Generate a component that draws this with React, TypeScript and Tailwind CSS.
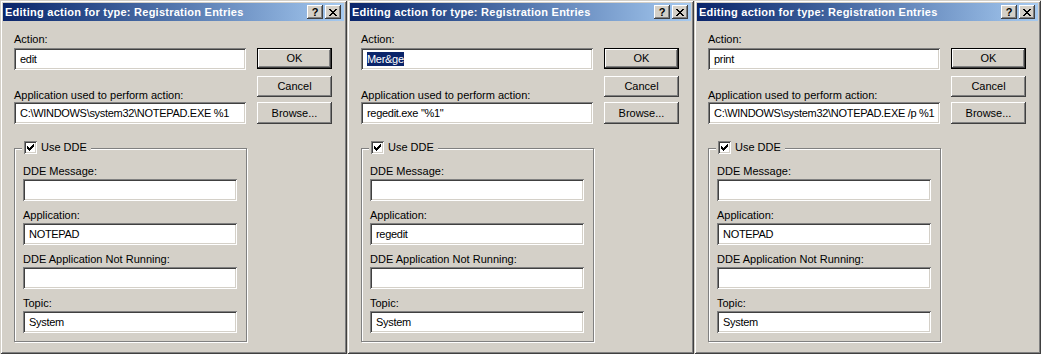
import React from "react";

const RAISED =
  "shadow-[inset_-1px_-1px_0_#404040,inset_1px_1px_0_#ffffff,inset_-2px_-2px_0_#808080,inset_2px_2px_0_#d4d0c8]";
const SUNKEN =
  "shadow-[inset_1px_1px_0_#808080,inset_-1px_-1px_0_#ffffff,inset_2px_2px_0_#404040,inset_-2px_-2px_0_#d4d0c8]";

function CloseGlyph() {
  const rows: number[][] = [
    [0, 1, 6, 7],
    [1, 2, 5, 6],
    [2, 3, 4, 5],
    [3, 4],
    [2, 3, 4, 5],
    [1, 2, 5, 6],
    [0, 1, 6, 7],
  ];
  return (
    <svg width="8" height="7" viewBox="0 0 8 7" shapeRendering="crispEdges">
      {rows.map((r, y) =>
        r.map((x) => <rect key={`${x}-${y}`} x={x} y={y} width="1" height="1" fill="#000" />)
      )}
    </svg>
  );
}

function CheckGlyph() {
  const rows: number[][] = [
    [6],
    [5, 6],
    [0, 4, 5, 6],
    [0, 1, 3, 4, 5],
    [0, 1, 2, 3, 4],
    [1, 2, 3],
    [2],
  ];
  return (
    <svg width="7" height="7" viewBox="0 0 7 7" shapeRendering="crispEdges">
      {rows.map((r, y) =>
        r.map((x) => <rect key={`${x}-${y}`} x={x} y={y} width="1" height="1" fill="#000" />)
      )}
    </svg>
  );
}

function Field({
  value,
  width,
  selected,
}: {
  value: string;
  width: string;
  selected?: boolean;
}) {
  return (
    <div
      className={`${width} h-[22px] bg-white ${SUNKEN} pl-[6px] flex items-center whitespace-nowrap overflow-hidden tracking-[-0.3px]`}
    >
      {selected ? (
        <span className="bg-[#0a246a] text-white leading-[14px]">{value}</span>
      ) : (
        <span className="leading-[14px]">{value}</span>
      )}
    </div>
  );
}

function Button({ label, isDefault, h }: { label: string; isDefault?: boolean; h: string }) {
  if (isDefault) {
    return (
      <div className={`w-[75px] ${h} border border-black`}>
        <div className={`w-full h-full ${RAISED} flex items-center justify-center`}>{label}</div>
      </div>
    );
  }
  return (
    <div className={`w-[75px] ${h} ${RAISED} flex items-center justify-center`}>{label}</div>
  );
}

function Label({ text }: { text: string }) {
  return <div className="h-[13px] leading-[13px] whitespace-nowrap">{text}</div>;
}

type D = {
  action: string;
  selected?: boolean;
  app: string;
  ddeApp: string;
};

function Dialog({ d }: { d: D }) {
  return (
    <div className="w-[347px] h-[354px] shrink-0 bg-[#d4d0c8] p-[3px] flex flex-col shadow-[inset_1px_1px_0_#d4d0c8,inset_-1px_-1px_0_#404040,inset_2px_2px_0_#ffffff,inset_-2px_-2px_0_#808080]">
      <div className="h-[18px] bg-linear-to-r from-[#0a246a] to-[#a6caf0] flex items-center pl-[2px] pr-[3px]">
        <div className="flex-1 text-white font-bold text-[11px] whitespace-nowrap tracking-[0.25px]">
          Editing action for type: Registration Entries
        </div>
        <div className="flex gap-[2px]">
          <div className={`w-[16px] h-[14px] bg-[#d4d0c8] ${RAISED} flex items-center justify-center font-bold text-[11px] leading-none text-black`}>
            ?
          </div>
          <div className={`w-[16px] h-[14px] bg-[#d4d0c8] ${RAISED} flex items-center justify-center`}>
            <CloseGlyph />
          </div>
        </div>
      </div>
      <div className="pl-[11px] pt-[12px] flex flex-col">
        <div className="flex gap-[11px]">
          <div className="w-[232px] flex flex-col">
            <Label text="Action:" />
            <div className="mt-[2px]">
              <Field value={d.action} width="w-[232px]" selected={d.selected} />
            </div>
            <div className="mt-[19px]">
              <Label text="Application used to perform action:" />
            </div>
            <Field value={d.app} width="w-[232px]" />
          </div>
          <div className="flex flex-col pt-[15px]">
            <Button label="OK" isDefault h="h-[21px]" />
            <div className="mt-[7px]">
              <Button label="Cancel" h="h-[21px]" />
            </div>
            <div className="mt-[5px]">
              <Button label="Browse..." h="h-[22px]" />
            </div>
          </div>
        </div>
        <div className="relative mt-[24px] w-[233px] border border-[#808080] shadow-[inset_1px_1px_0_#ffffff,1px_1px_0_#ffffff] pl-[8px] pt-[16px] pb-[8px] flex flex-col gap-[8px]">
          <div className="absolute left-[7px] top-[-8px] h-[13px] bg-[#d4d0c8] pl-[2px] pr-[4px] flex items-center gap-[4px]">
            <div className={`w-[13px] h-[13px] bg-white ${SUNKEN} flex items-center justify-center`}>
              <CheckGlyph />
            </div>
            <span className="leading-[13px]">Use DDE</span>
          </div>
          <div className="flex flex-col gap-[1px]">
            <Label text="DDE Message:" />
            <Field value="" width="w-[214px]" />
          </div>
          <div className="flex flex-col gap-[1px]">
            <Label text="Application:" />
            <Field value={d.ddeApp} width="w-[214px]" />
          </div>
          <div className="flex flex-col gap-[1px]">
            <Label text="DDE Application Not Running:" />
            <Field value="" width="w-[214px]" />
          </div>
          <div className="flex flex-col gap-[1px]">
            <Label text="Topic:" />
            <Field value="System" width="w-[214px]" />
          </div>
        </div>
      </div>
    </div>
  );
}

export default function App() {
  const dialogs: D[] = [
    { action: "edit", app: "C:\\WINDOWS\\system32\\NOTEPAD.EXE %1", ddeApp: "NOTEPAD" },
    { action: "Mer&ge", selected: true, app: 'regedit.exe "%1"', ddeApp: "regedit" },
    { action: "print", app: "C:\\WINDOWS\\system32\\NOTEPAD.EXE /p %1", ddeApp: "NOTEPAD" },
  ];
  return (
    <div className="w-[1041px] h-[354px] flex bg-[#d4d0c8] text-[11px] text-black font-['Liberation_Sans',Arial,sans-serif] overflow-hidden">
      {dialogs.map((d, i) => (
        <Dialog key={i} d={d} />
      ))}
    </div>
  );
}
